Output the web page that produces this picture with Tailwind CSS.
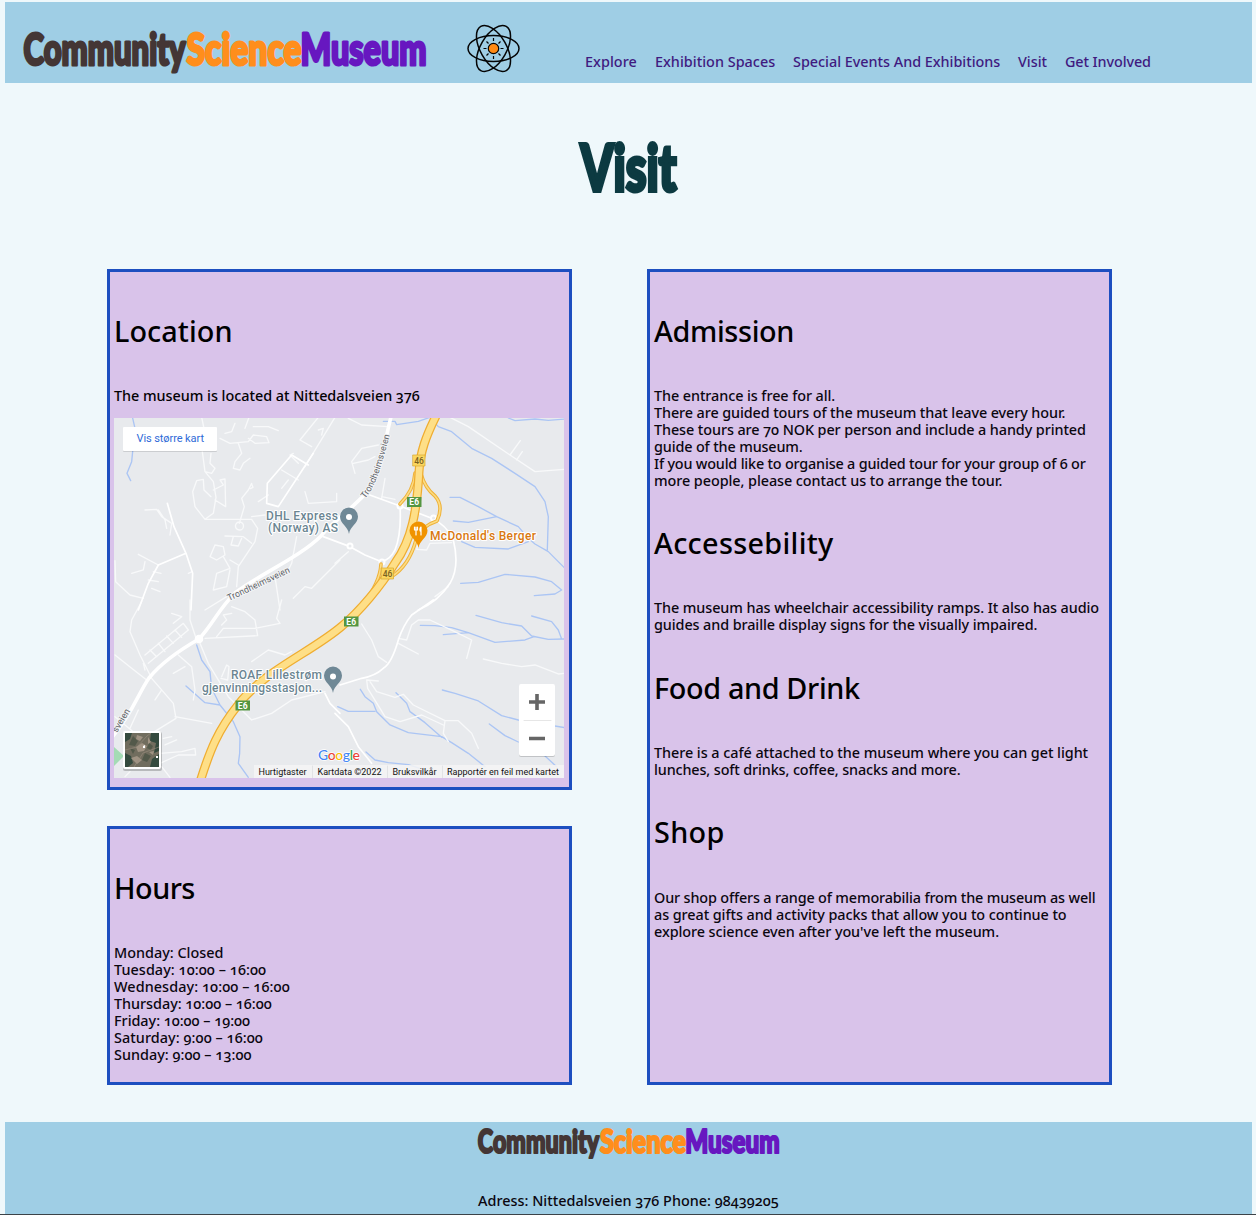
<!DOCTYPE html>
<html lang="en">
<head>
<meta charset="utf-8">
<title>Visit - Community Science Museum</title>
<script src="https://cdn.jsdelivr.net/npm/@tailwindcss/browser@4"></script>
</head>
<body class="bg-[#eff8fb] font-['Noto_Sans',sans-serif] font-medium text-[14.4px] leading-[17px] text-[#0b0710] [font-feature-settings:'onum'] h-[1215px] overflow-hidden flex flex-col">

<svg class="hidden">
  <symbol id="wordmark" viewBox="0 0 406 48">
    <g font-family="Lato, sans-serif" font-weight="900" font-size="43.5" stroke-width="3" stroke-linejoin="round">
      <text x="2.500" y="35.500" textLength="162" lengthAdjust="spacingAndGlyphs" fill="#443635" stroke="#443635">Community</text>
      <text x="165.500" y="35.500" textLength="115" lengthAdjust="spacingAndGlyphs" fill="#ff8e1c" stroke="#ff8e1c">Science</text>
      <text x="279.500" y="35.500" textLength="126" lengthAdjust="spacingAndGlyphs" fill="#6717c0" stroke="#6717c0">Museum</text>
    </g>
  </symbol>
</svg>

<header class="mt-0.5 ml-[5px] mr-1 h-[81px] bg-[#9fcee5] flex shrink-0 items-start">
  <svg class="ml-4 mt-[27px] w-[406px] h-12 shrink-0"><use href="#wordmark"/></svg>
  <svg class="ml-[39px] mt-5 w-[56px] h-[54px] shrink-0" viewBox="-27.5 -26.5 56 54" fill="none" stroke="#050505" stroke-width="1.5">
    <ellipse rx="25.5" ry="13"/>
    <ellipse rx="25.5" ry="13" transform="rotate(60)"/>
    <ellipse rx="25.5" ry="13" transform="rotate(-60)"/>
    <circle r="5.2" fill="#ff8a14" stroke-width="1.2"/>
    <path stroke-width="1.2" d="M0-7.5V-10.5M0 7.5V10.5M-7-0H-10M7 0H10M-5-5L-7-7M5-5L7-7M-5 5L-7 7M5 5L7 7"/>
  </svg>
  <nav class="ml-[63px] mt-[51px] flex whitespace-nowrap text-[#3f1a80]">
    <a class="w-[70px] tracking-[0.05px]">Explore</a>
    <a class="w-[138px] tracking-[0.02px]">Exhibition Spaces</a>
    <a class="w-[225px] tracking-[-0.02px]">Special Events And Exhibitions</a>
    <a class="w-[47px]">Visit</a>
    <a class="tracking-[-0.1px]">Get Involved</a>
  </nav>
</header>

<main class="flex flex-col">
  <h1 class="mt-12 flex justify-center">
    <svg class="w-[104px] h-[70px] overflow-visible" viewBox="0 0 104 70"><text x="4.500" y="60" font-family="Lato, sans-serif" font-weight="900" font-size="65" textLength="96" lengthAdjust="spacingAndGlyphs" fill="#0c3a41" stroke="#0c3a41" stroke-width="4">Visit</text></svg>
  </h1>
  <div class="mt-[68px] ml-[107px] flex gap-[75px] h-[816px]">
    <div class="w-[465px] flex flex-col justify-between">
      <section class="h-[521px] border-3 border-[#1d4fc0] bg-[#d9c3ea] px-1 pt-[42px] text-[#020103]">
        <h2 class="text-[28.8px] leading-[34px] tracking-[0.07px] text-black">Location</h2>
        <p class="mt-[39px] tracking-[-0.03px] whitespace-nowrap">The museum is located at Nittedalsveien 376</p>
        <div class="mt-3.5 w-[450px] h-[360px] [font-feature-settings:normal]">
          <svg class="block w-[450px] h-[360px]" viewBox="0 0 450 360" fill="none" stroke-linejoin="round" stroke-linecap="round">
            <rect width="450" height="360" fill="#e8eaed"/>
            <!-- streams -->
            <g stroke="#abc5f4" stroke-width="4">
              <path transform="translate(-9 -8) scale(.3333)" d="M82 20L90 55L80 155L66 190L77 212"/>
              <path transform="translate(221 -8) scale(.3333)" d="M145 34L180 34L185 44L250 34L285 22L310 50L350 65L410 115L470 145L540 190L600 230L630 275L640 320L637 420M345 262L375 262L430 290L485 320L550 350L580 385L600 402L640 425L690 475M355 333L400 337L485 320M380 395L420 412L520 417L580 395M377 520L430 517L510 493L600 501L650 515L680 540L660 552L598 557M520 24L540 32L600 27L640 31L690 27"/>
              <path transform="translate(-9 182) scale(.3333)" d="M275 135L290 180L315 215L320 265L345 315L385 365L405 410L404 460L400 490L430 532M243 258L300 308L345 315"/>
              <path transform="translate(221 182) scale(.3333)" d="M423 46L500 68L560 78L590 108L640 118L690 117M590 48L650 65L670 90L680 117M256 76L300 77L350 83L400 98L325 104M400 98L480 127L570 120L597 110M322 270L360 280L430 303L500 347L550 360L690 383M463 372L510 407L550 426M76 268L90 290L115 310L125 335L165 375L220 398L320 410L350 428L400 460L450 500M8 320L40 334L120 334M183 278L215 310L225 335L270 368L320 412M93 456L120 480L160 488L220 494L300 520M630 468L665 500"/>
            </g>
            <!-- minor roads -->
            <g stroke="#f8f9fa" stroke-width="4">
              <path transform="translate(-9 -8) scale(.3333)" d="M290 22L298 60M292 125L300 185L325 215L333 262L325 310L300 328L270 290L263 245L275 212L295 208L297 240L318 260M325 240L355 225L345 210L360 207L362 290L330 270M318 130L315 160L330 175L320 190L300 185M345 85L375 100L430 95L445 75L485 80L492 98L450 100L430 85M400 100L410 130L390 155L385 175L405 180L415 160L435 145M360 70L380 65L390 40M420 55L432 22M445 50L490 50L520 62M440 220L430 240L410 265L418 290L403 340M440 222L444 232L436 236M404 336A12 12 0 1 1 403 360A12 12 0 1 1 404 336M300 328L440 328L458 355L450 395L400 470L395 530M440 320L480 315M460 275L490 255M120 300L155 298L170 320L200 340L195 375M160 300L180 330L185 355M360 378L415 380L440 400M385 380L378 405L400 408L410 385M330 405L315 440L335 450L360 435L355 410L330 405M355 440L375 475L335 490L325 540L365 530L375 480M375 450L400 465M100 433L160 465M120 455L115 480L80 490M145 485L168 490M130 510L160 515M140 535L165 545M30 452L32 515L75 555L115 565M250 490L262 485M565 565L600 530L620 535L705 450M575 380L560 460L550 480M510 500L525 600M365 560L300 600M600 245L610 280L695 275L695 250M640 22L585 90L620 110M640 60L655 55L650 75M690 22L600 170M530 180L580 210M580 160L555 135L565 130M530 235L550 210"/>
              <path transform="translate(221 -8) scale(.3333)" d="M40 25L80 45L160 50M60 190L50 155L80 115L130 105M55 160L100 150L120 140M345 22L400 50L525 135L600 185L690 178M525 135L556 92M545 150L562 125M140 265L150 205M140 260L180 268M250 400L245 418L275 420L285 400L350 398M0 460L40 425M340 530L300 560"/>
              <path transform="translate(-9 182) scale(.3333)" d="M110 5L80 60L75 95L105 165L140 235L205 310L213 355L140 400M30 165L80 205L125 240M255 0L255 60L275 120M120 165L235 70L250 90L130 190M135 150L155 170M160 130L180 155M185 108L205 130M210 90L230 112M115 190L120 210M200 40L230 50L205 70M335 110L355 85L450 85L525 70L515 55L530 0M300 115L458 107L450 60L420 35L380 20M350 75L365 60L355 45L380 40M285 130L310 190L370 290L440 360L500 340L560 300L660 275M220 165L260 200L270 270L265 300M205 220L240 200M170 270L150 300M210 350L320 370M100 330L75 385M350 230L365 195L372 200L368 240L348 235M440 185L490 150L540 165L560 155M165 460L230 455L270 445L272 465L220 465L165 490M175 415L200 410M180 435L215 420M30 350L90 400M170 500L195 532M75 515L60 530"/>
              <path transform="translate(221 182) scale(.3333)" d="M190 115L215 120L230 75L250 60L285 60L370 100L410 120L395 175M190 130L250 162M80 72L110 120L130 170L155 187M445 177L500 190L560 200L600 195L670 222L690 220M130 243L95 240L98 265L135 325L150 350L195 365L260 345L325 375M105 245L125 275L180 292L205 283L235 315L330 362L370 362L410 400L430 445M330 362L325 400L340 425"/>
            </g>
            <g stroke="#fff" stroke-width="5">
              <path transform="translate(-9 -8) scale(.3333)" d="M187 280L207 350L243 430L263 490L258 600M243 430L160 465L130 520L100 600M625 130L520 290L485 280L487 220L560 135L610 165"/>
              <path transform="translate(221 -8) scale(.3333)" d="M90 250L195 288L290 325Q335 345 355 390Q375 470 345 520Q310 575 250 600M195 288Q200 370 180 420Q165 450 140 455L90 435L45 410L-35 380"/>
              <path transform="translate(221 182) scale(.3333)" d="M295 0L230 45Q205 75 190 120Q170 190 145 205Q120 228 80 235L15 255M0 340L40 380L70 440L110 490"/>
              <path transform="translate(-9 182) scale(.3333)" d="M660 280L675 310L705 340"/>
            </g>
            <g stroke="#fff" stroke-width="3.6">
              <path d="M277-1C270 25 267 55 256 71C235 94 215 107 207 118C186 139 146 156 121 175C104 192 99 206 85 221C64 233 48 244 35 260C24 276 18 296-1 318"/>
              <circle cx="85" cy="221" r="2.5" fill="#fff"/>
            </g>
            <g fill="#e8eaed" stroke="#fff" stroke-width="2"><circle cx="286" cy="88" r="2.5"/><circle cx="319.500" cy="100" r="2.500"/><circle cx="236" cy="128" r="2.500"/><circle cx="268" cy="144" r="2.500"/></g>
            <path d="M0 329L10 338L0 348Z" fill="#a4dbb5"/>
            <!-- motorway E6 -->
            <path stroke="#eeb23a" stroke-width="3.600" d="M301 55Q300 72 286 86M307 56Q311 70 321 78Q330 88 323 103Q308 108 302 120M302 122Q295 148 277 159M267 146Q266 165 248 187"/>
            <path stroke="#fddc83" stroke-width="1.600" d="M301 55Q300 72 286 86M307 56Q311 70 321 78Q330 88 323 103Q308 108 302 120M302 122Q295 148 277 159M267 146Q266 165 248 187"/>
            <path stroke="#efad31" stroke-width="9" d="M323-4C312 18 306 34 305 54C303 92 298 122 281 145C267 168 245 194 228 208C198 234 149 253 124 287C104 312 96 332 86 364"/>
            <path stroke="#fedf87" stroke-width="6.500" d="M323-4C312 18 306 34 305 54C303 92 298 122 281 145C267 168 245 194 228 208C198 234 149 253 124 287C104 312 96 332 86 364"/>
            <!-- road shields -->
            <g font-family="Roboto, sans-serif" font-size="8.500" font-weight="700" text-anchor="middle">
              <g fill="#fbd65f" stroke="#d9a930" stroke-width=".7"><rect x="299" y="37" width="12" height="11"/><rect x="267.500" y="150" width="12" height="11"/></g>
              <g fill="#7a6222" font-weight="500"><text x="305" y="45.500">46</text><text x="273.500" y="158.500">46</text></g>
              <g fill="#549642"><rect x="293" y="79" width="14.500" height="10"/><rect x="230" y="198.500" width="14.500" height="10"/><rect x="121.500" y="282.500" width="14.500" height="10"/></g>
              <g fill="#fff"><text x="300.200" y="87">E6</text><text x="237.200" y="206.500">E6</text><text x="128.700" y="290.500">E6</text></g>
            </g>
            <!-- street and place names -->
            <g font-family="Roboto, sans-serif" font-weight="500" paint-order="stroke" stroke="#fff" stroke-width="2">
              <g fill="#5f6368" font-size="9" font-weight="400" stroke="#f3f4f5">
                <text transform="translate(115 183) rotate(-25)" textLength="68">Trondheimsveien</text>
                <path id="trond" stroke="none" fill="none" d="M251 81C263 67 268 45 277 13"/>
                <text><textPath href="#trond" textLength="69">Trondheimsveien</textPath></text>
                <text transform="translate(3 315) rotate(-59)">sveien</text>
              </g>
              <g fill="#6b8592" font-size="12">
                <text x="152" y="101.500" textLength="72">DHL Express</text>
                <text x="154" y="114" textLength="70">(Norway) AS</text>
                <text x="117" y="260.500" textLength="91">ROAF Lillestrøm</text>
                <text x="88" y="273.500" textLength="120">gjenvinningsstasjon...</text>
              </g>
              <text x="316" y="122" textLength="106" font-size="12" fill="#d9780f">McDonald's Berger</text>
            </g>
            <!-- pins -->
            <g fill="#6f8896">
              <path d="M235 116C234 108 226 106 226 98.500A9 9 0 0 1 244 98.500C244 106 236 108 235 116Z"/>
              <path d="M219 275C218 267 210 265 210 257.500A9 9 0 0 1 228 257.500C228 265 220 267 219 275Z"/>
            </g>
            <circle cx="235" cy="99" r="3" fill="#fff"/><circle cx="219" cy="258.500" r="3" fill="#fff"/>
            <path fill="#f09300" d="M304.500 130C303.500 122 295.500 120 295.500 112.500A9 9 0 0 1 313.500 112.500C313.500 120 305.500 122 304.500 130Z"/>
            <path stroke="#fff" stroke-width="1.200" d="M300.500 109V112M302 109V117M303.500 109V112M300.500 112H303.500M307 117V109C305.500 110 305.500 113 307 113.500"/>
            <!-- larger map button -->
            <rect x="9" y="10" width="94" height="24" rx="1" fill="#0000001f"/>
            <rect x="9" y="9" width="94" height="24" rx="1" fill="#fff"/>
            <text x="22.500" y="24" font-family="Roboto, sans-serif" font-weight="400" font-size="11" textLength="67.500" fill="#2f6bd8">Vis større kart</text>
            <!-- satellite thumbnail -->
            <rect x="9" y="314" width="39" height="39" rx="2" fill="#00000035"/>
            <rect x="9" y="313" width="38" height="38" rx="2" fill="#fff"/>
            <svg x="11" y="315" width="34" height="34" viewBox="0 0 34 34" stroke="none">
              <rect width="34" height="34" fill="#716d5e"/>
              <path fill="#344a3e" d="M0 0H7L5 6L0 9ZM26 0H34V18L29 20L31 10L25 8ZM0 20L6 23L8 30L3 34H0ZM27 26L34 21V34H25Z"/>
              <path fill="#53594a" d="M8 3L13 8L10 13L4 12ZM20 20L26 23L22 29L17 27ZM5 15L10 17L8 21ZM24 10L28 13L26 17L22 15Z"/>
              <path fill="#a09383" d="M12 2L18 4L15 8L11 6ZM11 14L17 10L22 13L19 18L13 19ZM23 4L26 9L23 11ZM6 25L12 23L17 27L12 31ZM24 19L29 18L28 22Z"/>
              <path stroke="#9c8f80" stroke-width=".6" d="M0 17L12 14L22 3L26 0M9 34L18 20L34 14"/>
              <path fill="#fff" d="M18 13L20 12L20 15L18 15ZM31 23H33V25H31Z"/>
            </svg>
            <!-- zoom control -->
            <rect x="405" y="267" width="36" height="72" rx="2" fill="#0000002a"/>
            <rect x="405" y="266" width="36" height="72" rx="2" fill="#fff"/>
            <path stroke="#e6e6e6" d="M410 302.500H437"/>
            <path stroke="#666" stroke-width="3.600" stroke-linecap="butt" d="M415 284H431M423 276V292M415 320.500H431"/>
            <!-- attribution -->
            <text x="204" y="342" font-family="Lato, sans-serif" font-weight="500" font-size="14" textLength="42" paint-order="stroke" stroke="#fff" stroke-width="1.500"><tspan fill="#4285f4">G</tspan><tspan fill="#ea4335">o</tspan><tspan fill="#fbbc05">o</tspan><tspan fill="#4285f4">g</tspan><tspan fill="#34a853">l</tspan><tspan fill="#ea4335">e</tspan></text>
            <path fill="#f5f5f5" fill-opacity=".85" d="M140 347H450V360H140Z"/>
            <path stroke="#e2e3e5" d="M198.500 348V360M273.500 348V360M328.500 348V360"/>
            <g font-family="Roboto, sans-serif" font-weight="400" font-size="9" fill="#111"><text x="144.500" y="357" textLength="48">Hurtigtaster</text><text x="203.500" y="357" textLength="64">Kartdata ©2022</text><text x="278.500" y="357" textLength="44">Bruksvilkår</text><text x="333" y="357" textLength="112">Rapportér en feil med kartet</text></g>
          </svg>
        </div>
      </section>
      <section class="h-[259px] border-3 border-[#1d4fc0] bg-[#d9c3ea] px-1 pt-[42px]">
        <h2 class="text-[28.8px] leading-[34px] tracking-[-0.5px] text-black">Hours</h2>
        <ul class="mt-[39px] whitespace-nowrap">
          <li>Monday: Closed</li>
          <li class="tracking-[0.06px]">Tuesday: 10:00 – 16:00</li>
          <li class="tracking-[0.08px]">Wednesday: 10:00 – 16:00</li>
          <li class="tracking-[-0.03px]">Thursday: 10:00 – 16:00</li>
          <li class="tracking-[-0.03px]">Friday: 10:00 – 19:00</li>
          <li class="tracking-[0.06px]">Saturday: 9:00 – 16:00</li>
          <li class="tracking-[0.02px]">Sunday: 9:00 – 13:00</li>
        </ul>
      </section>
    </div>
    <section class="w-[465px] border-3 border-[#1d4fc0] bg-[#d9c3ea] px-1 pt-[42px] whitespace-nowrap">
      <h2 class="text-[28.8px] leading-[34px] tracking-[-0.35px] text-black">Admission</h2>
      <p class="mt-[39px]">
        <span class="block tracking-[-0.08px]">The entrance is free for all.</span>
        <span class="block tracking-[-0.1px]">There are guided tours of the museum that leave every hour.</span>
        <span class="block tracking-[-0.09px]">These tours are 70 NOK per person and include a handy printed</span>
        <span class="block tracking-[-0.14px]">guide of the museum.</span>
        <span class="block tracking-[-0.19px]">If you would like to organise a guided tour for your group of 6 or</span>
        <span class="block tracking-[-0.07px]">more people, please contact us to arrange the tour.</span>
      </p>
      <h2 class="mt-[37px] text-[28.8px] leading-[34px] tracking-[0.31px] text-black">Accessebility</h2>
      <p class="mt-[39px]">
        <span class="block tracking-[-0.085px]">The museum has wheelchair accessibility ramps. It also has audio</span>
        <span class="block tracking-[-0.09px]">guides and braille display signs for the visually impaired.</span>
      </p>
      <h2 class="mt-[38px] text-[28.8px] leading-[34px] tracking-[-0.36px] text-black">Food and Drink</h2>
      <p class="mt-[39px]">
        <span class="block tracking-[-0.05px]">There is a café attached to the museum where you can get light</span>
        <span class="block tracking-[-0.13px]">lunches, soft drinks, coffee, snacks and more.</span>
      </p>
      <h2 class="mt-[37px] text-[28.8px] leading-[34px] tracking-[0.3px] text-black">Shop</h2>
      <p class="mt-10">
        <span class="block tracking-[-0.15px]">Our shop offers a range of memorabilia from the museum as well</span>
        <span class="block tracking-[-0.075px]">as great gifts and activity packs that allow you to continue to</span>
        <span class="block tracking-[-0.08px]">explore science even after you've left the museum.</span>
      </p>
    </section>
  </div>
</main>

<footer class="mt-[37px] ml-[5px] mr-1 h-[92px] shrink-0 bg-[#9fcee5] flex flex-col items-center">
  <svg class="mt-1 mr-0.5 w-[304px] h-9"><use href="#wordmark"/></svg>
  <p class="mt-[30px]">Adress: Nittedalsveien 376 Phone: 98439205</p>
</footer>
<div class="h-px shrink-0 bg-[#3c4348]"></div>
</body>
</html>
